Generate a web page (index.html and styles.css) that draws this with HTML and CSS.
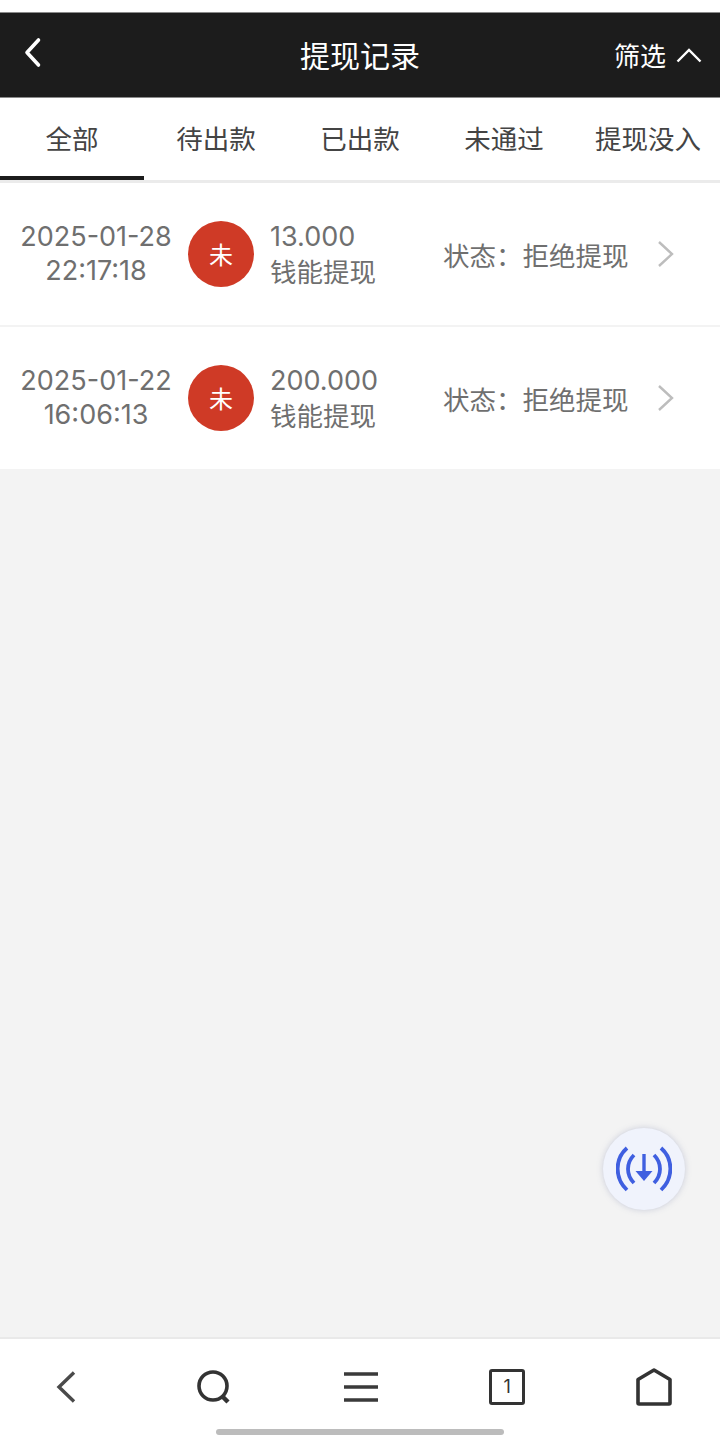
FILE: index.html
```html
<!DOCTYPE html>
<html lang="zh-CN">
<head>
<meta charset="utf-8">
<title>提现记录</title>
<link rel="stylesheet" href="styles.css">
</head>
<body>
<div class="app">
  <div class="statusbar"></div>
  <header class="header">
    <svg class="back" width="24" height="32" viewBox="0 0 24 32"><path d="M17.5 3 L6 15.5 L17.5 28" fill="none" stroke="#fff" stroke-width="3.6" stroke-linecap="round" stroke-linejoin="round"/></svg>
    <h1 class="title">提现记录</h1>
    <div class="filter">
      <span>筛选</span>
      <svg width="26" height="16" viewBox="0 0 26 16"><path d="M1.5 14.5 L13 3 L24.5 14.5" fill="none" stroke="#fff" stroke-width="2.4"/></svg>
    </div>
  </header>
  <nav class="tabs">
    <div class="tab active">全部</div>
    <div class="tab">待出款</div>
    <div class="tab">已出款</div>
    <div class="tab">未通过</div>
    <div class="tab">提现没入</div>
  </nav>
  <main class="list">
    <section class="row">
      <div class="date"><div>2025-01-28</div><div>22:17:18</div></div>
      <div class="badge">未</div>
      <div class="info"><div class="amount">13.000</div><div>钱能提现</div></div>
      <div class="status">状态：拒绝提现</div>
      <svg class="chev" width="18" height="28" viewBox="0 0 18 28"><path d="M2 2 L15 14 L2 26" fill="none" stroke="#bdbdbd" stroke-width="2.4"/></svg>
    </section>
    <section class="row">
      <div class="date"><div>2025-01-22</div><div>16:06:13</div></div>
      <div class="badge">未</div>
      <div class="info"><div class="amount">200.000</div><div>钱能提现</div></div>
      <div class="status">状态：拒绝提现</div>
      <svg class="chev" width="18" height="28" viewBox="0 0 18 28"><path d="M2 2 L15 14 L2 26" fill="none" stroke="#bdbdbd" stroke-width="2.4"/></svg>
    </section>
  </main>
  <div class="content">
    <div class="fab">
      <svg width="56" height="48" viewBox="0 0 56 48" fill="none" stroke="#3f5fe0" stroke-width="3.8">
        <path d="M11 3 C-1.500 14 -1.500 33 11 45"/>
        <path d="M45 3 C57.500 14 57.500 33 45 45"/>
        <path d="M18 10 C10 18 10 30 18 38"/>
        <path d="M38 10 C46 18 46 30 38 38"/>
        <path d="M28 9 V28" stroke-width="3.4"/>
        <path d="M19.500 26 H36.500 L28 36 Z" fill="#3f5fe0" stroke="none"/>
      </svg>
    </div>
  </div>
  <footer class="toolbar">
    <div class="tools">
      <svg width="36" height="36" viewBox="0 0 36 36"><path d="M25 3.500 L10 18 L25 32.500" fill="none" stroke="#4a4a4a" stroke-width="3.4"/></svg>
      <svg width="36" height="36" viewBox="0 0 36 36"><circle cx="17" cy="17" r="14" fill="none" stroke="#333" stroke-width="3.6"/><path d="M26 27 L32 33" stroke="#333" stroke-width="4.500"/></svg>
      <svg width="36" height="36" viewBox="0 0 36 36"><path d="M1 5 H35 M1 18 H35 M1 31 H35" stroke="#3a3a3a" stroke-width="3.6"/></svg>
      <div class="tabcount">1</div>
      <svg width="36" height="38" viewBox="0 0 36 38"><path d="M18 2 L34 11.500 V35 Q34 36 33 36 H3 Q2 36 2 35 V11.500 Z" fill="none" stroke="#333" stroke-width="3.6" stroke-linejoin="round"/></svg>
    </div>
    <div class="homebar"></div>
  </footer>
</div>
</body>
</html>
```
FILE: styles.css
```css
* { box-sizing: border-box; }
html, body { margin: 0; padding: 0; }
body { font-family: "Inter", "Noto Sans CJK SC", sans-serif; background: #f3f3f3; }
.app { width: 720px; height: 1436px; display: flex; flex-direction: column; overflow: hidden; }
.statusbar { height: 12px; background: #fff; flex: none; }
.header { height: 86px; flex: none; background: #1c1c1c; color: #fff; display: flex; align-items: center; justify-content: center; position: relative; border-top: 1px solid #8a8a8a; border-bottom: 1px solid #8a8a8a; }
.back { position: absolute; left: 21px; top: 24px; }
.title { margin: 0; font-size: 30px; font-weight: 400; font-family: "Noto Sans CJK SC", sans-serif; line-height: 1; position: relative; top: -1px; }
.filter { position: absolute; right: 18px; top: 23px; display: flex; align-items: center; gap: 10px; font-size: 26px; font-family: "Noto Sans CJK SC", sans-serif; line-height: 38px; }
.tabs { display: flex; height: 85px; flex: none; background: #fff; border-bottom: 3px solid #ebebeb; }
.tab { width: 144px; height: 82px; text-align: center; font-size: 26.500px; line-height: 80px; color: #444; font-family: "Noto Sans CJK SC", sans-serif; white-space: nowrap; }
.tab.active { border-bottom: 4px solid #1c1c1c; }
.list { background: #fff; flex: none; }
.row { height: 142px; display: flex; align-items: center; padding-left: 19px; color: #6f6f6f; font-size: 26.500px; }
.row + .row { height: 144px; border-top: 2px solid #f3f3f3; }
.date { width: 154px; text-align: center; font-size: 27px; line-height: 34px; white-space: nowrap; }
.badge { width: 66px; height: 66px; margin-left: 15px; border-radius: 50%; background: #cf3a26; color: #fff; text-align: center; line-height: 66px; font-size: 24px; font-family: "Noto Sans CJK SC", sans-serif; flex: none; }
.info { width: 173px; margin-left: 16px; line-height: 34px; font-family: "Noto Sans CJK SC", sans-serif; white-space: nowrap; }
.amount { font-family: "Inter", sans-serif; font-size: 27px; }
.status { width: 214px; font-family: "Noto Sans CJK SC", sans-serif; white-space: nowrap; }
.content { flex: 1; position: relative; }
.fab { position: absolute; left: 603px; top: 659px; width: 82px; height: 82px; border-radius: 50%; background: #f0f3fc; box-shadow: 0 0 6px rgba(120, 130, 170, 0.35); display: flex; align-items: center; justify-content: center; }
.toolbar { height: 99px; flex: none; background: #fff; border-top: 2px solid #e9e9e9; position: relative; }
.tools { display: flex; align-items: center; justify-content: space-between; padding: 29px 48px 0 49px; }
.tabcount { width: 36px; height: 36px; border: 3.600px solid #333; border-radius: 3px; color: #333; font-size: 18px; line-height: 29px; text-align: center; font-family: "Inter", sans-serif; }
.homebar { position: absolute; left: 216px; top: 90px; width: 288px; height: 6px; border-radius: 3px; background: #bcbcbc; }
```
